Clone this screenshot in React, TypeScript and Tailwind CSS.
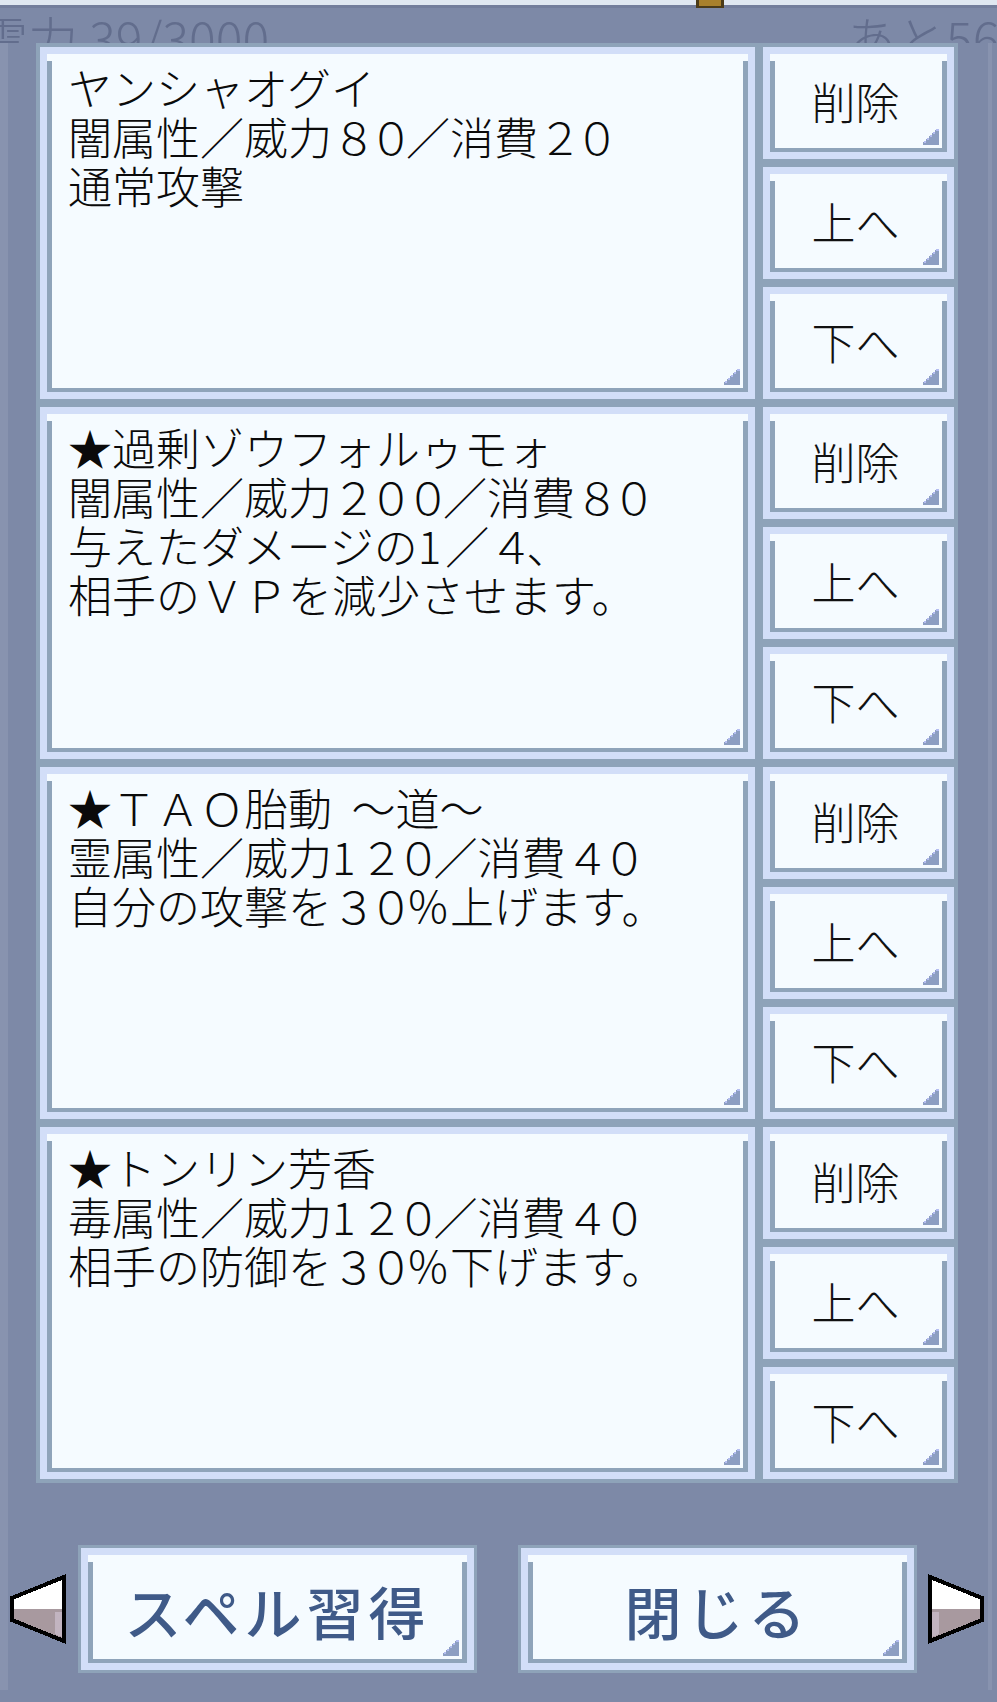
import React from "react";

const FONT = "font-['Noto_Sans_CJK_JP','Noto_Sans',sans-serif]";

function Grip() {
  return (
    <svg
      className="absolute right-[3px] bottom-[3px]"
      width="16"
      height="16"
      viewBox="0 0 16 16"
      shapeRendering="crispEdges"
    >
      <path d="M16 0 V16 H0 V13 H3 V10 H6 V7 H9 V4 H12 V1 H13 V0 Z" fill="#8c9ec2" />
      <path d="M13 0 H16 V2 H13 Z M10 3 H12 V5 H10 Z M7 6 H9 V8 H7 Z M4 9 H6 V11 H4 Z M1 12 H3 V14 H1 Z" fill="#b4bdf0" />
    </svg>
  );
}

function Bevel({
  children,
  className = "",
  border = "border-4",
  innerClass = "",
}: {
  children?: React.ReactNode;
  className?: string;
  border?: string;
  innerClass?: string;
}) {
  return (
    <div className={`${border} border-[#8ea3b9] bg-[#d2def8] p-[7px] ${className}`}>
      <div className="h-full bg-[#f5fbff] pt-[7px] flex flex-col">
        <div
          className={`relative flex-1 border-x-[5px] border-b-[4px] border-[#8fa4ba] ${innerClass}`}
        >
          {children}
          <Grip />
        </div>
      </div>
    </div>
  );
}

function SideButton({ label }: { label: string }) {
  return (
    <Bevel className="h-[120px]" innerClass="flex items-center justify-center pb-[8px] pr-[6px]">
      <span className={`${FONT} text-[44px] leading-none font-light text-[#111]`}>{label}</span>
    </Bevel>
  );
}

const spells: string[][] = [
  ["ヤンシャオグイ", "闇属性／威力８０／消費２０", "通常攻撃"],
  ["★過剰ゾウフォルゥモォ", "闇属性／威力２００／消費８０", "与えたダメージの1／４、", "相手のＶＰを減少させます。"],
  ["★ＴＡＯ胎動  ～道～", "霊属性／威力1２０／消費４０", "自分の攻撃を３０％上げます。"],
  ["★トンリン芳香", "毒属性／威力1２０／消費４０", "相手の防御を３０％下げます。"],
];

function Line({ text }: { text: string }) {
  const parts = text.split(/([０-９1])/);
  return (
    <div className="text-[44px] leading-[49px] font-light text-[#0a0a0a] whitespace-pre">
      {parts.map((p, i) =>
        p === "1" ? (
          <span key={i} className="tracking-[4px]">
            {p}
          </span>
        ) : /^[０-９]$/.test(p) ? (
          <span key={i} className="tracking-[-7px]">
            {p}
          </span>
        ) : (
          <span key={i}>{p}</span>
        )
      )}
    </div>
  );
}

function Arrow({ dir }: { dir: "left" | "right" }) {
  const flip = dir === "right";
  return (
    <svg
      width="58"
      height="70"
      viewBox="0 0 58 70"
      shapeRendering="crispEdges"
      className={flip ? "-scale-x-100" : ""}
    >
      <path d="M55 3 L55 35 L3 35 L3 24 Z" fill="#ffffff" />
      <path d="M3 35 L55 35 L55 67 L3 46 Z" fill="#a8999f" />
      <path d="M46 38 L55 38 L55 64 L46 60 Z" fill="#c2b4c0" />
      <path d="M55 3 L55 67 L3 46 L3 24 Z" fill="none" stroke="#000" strokeWidth="4" strokeLinejoin="miter" />
    </svg>
  );
}

function BigButton({ label }: { label: string }) {
  return (
    <Bevel
      border="border-[3px]"
      className="w-[399px] h-[128px]"
      innerClass="flex items-center justify-center"
    >
      <span className={`${FONT} text-[57px] leading-none font-medium tracking-[5px] text-[#3f5a88]`}>
        {label}
      </span>
    </Bevel>
  );
}

export default function App() {
  return (
    <div className={`relative w-[997px] h-[1702px] overflow-hidden bg-[#7d89a7] ${FONT}`}>
      {/* top strip */}
      <div className="h-[5px] bg-[#e0e8f1]" />
      <div className="h-[3px] bg-[#737e9c]" />
      <div className="absolute left-[696px] top-0 w-[28px] h-[8px] bg-[#a8802c] border-x-[3px] border-b-[2px] border-[#4b3b18]" />

      {/* ghost header */}
      <div className="h-[35px] overflow-hidden flex whitespace-nowrap">
        <span className="shrink-0 ml-[-22px] w-[320px] pt-[4px] text-[50px] leading-none font-light text-[#5c6787] opacity-80">
          霊力 39/3000
        </span>
        <span className="shrink-0 ml-[548px] pt-[4px] text-[50px] leading-none font-light text-[#5c6787] opacity-80">
          あと56秒
        </span>
      </div>

      {/* frame */}
      <div className="h-[1647px] mr-[5px] border-l-[8px] border-r-[4px] border-[#8893af]">
        {/* list */}
        <div className="ml-[28px] flex flex-col">
          {spells.map((lines, i) => (
            <div key={i} className="flex h-[360px]">
              <Bevel className="w-[723px] h-full" innerClass="pl-[16px] pt-[2px]">
                {lines.map((l, j) => (
                  <Line key={j} text={l} />
                ))}
              </Bevel>
              <div className="w-[199px] flex flex-col">
                <SideButton label="削除" />
                <SideButton label="上へ" />
                <SideButton label="下へ" />
              </div>
            </div>
          ))}
        </div>

        {/* bottom buttons */}
        <div className="mt-[62px] flex items-center pl-[1px]">
          <Arrow dir="left" />
          <div className="ml-[11px]">
            <BigButton label="スペル習得" />
          </div>
          <div className="ml-[41px]">
            <BigButton label="閉じる" />
          </div>
          <div className="ml-[10px]">
            <Arrow dir="right" />
          </div>
        </div>
      </div>
    </div>
  );
}
